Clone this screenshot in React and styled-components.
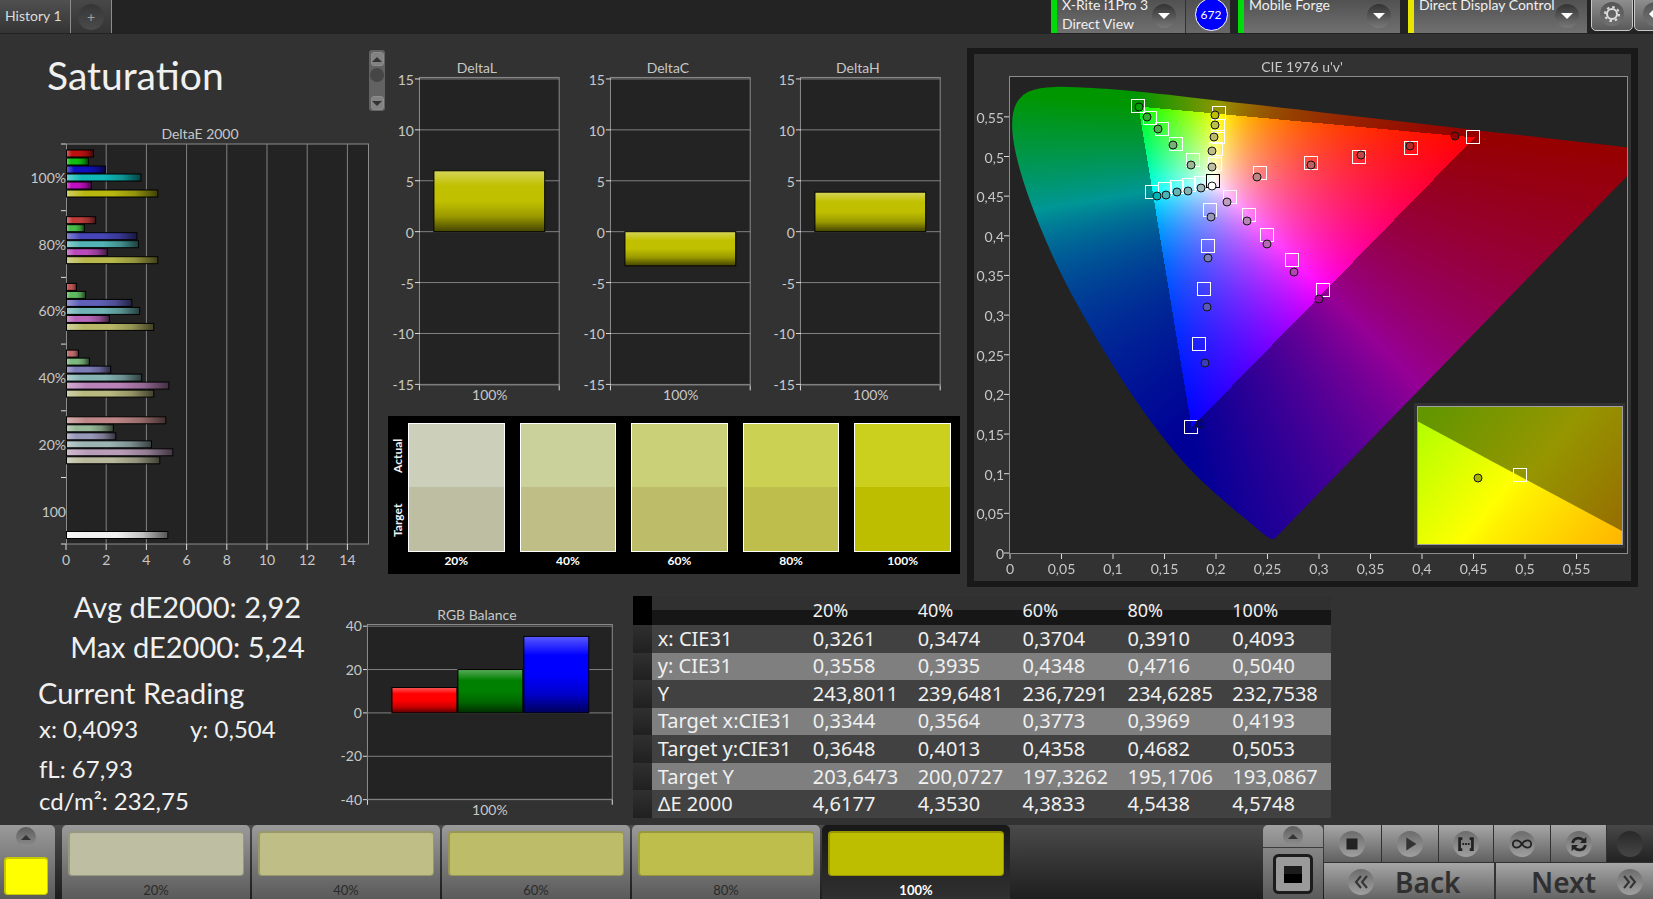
import React, { useEffect, useRef } from "react";
import styled, { createGlobalStyle, css } from "styled-components";

const uiFont = `Lato, "Liberation Sans", sans-serif`;
const gridFont = `"Noto Sans", "Open Sans", sans-serif`;

const deltaGroups = [
  {
    label: "100%",
    values: [1.34, 1.09, 1.93, 3.7, 1.24, 4.54],
    colors: ["#be1010", "#10be10", "#1010be", "#10b8b8", "#be10be", "#b8b810"],
  },
  {
    label: "80%",
    values: [1.45, 0.89, 3.5, 3.58, 2.03, 4.54],
    colors: ["#be3c3c", "#46b946", "#4646b9", "#52b4b4", "#b94ab9", "#b8b84d"],
  },
  {
    label: "60%",
    values: [0.5, 0.95, 3.25, 3.64, 2.13, 4.34],
    colors: ["#be5454", "#5fb95f", "#6060b9", "#6eb4b4", "#b968b9", "#b8b868"],
  },
  {
    label: "40%",
    values: [0.6, 1.14, 2.2, 3.74, 5.09, 4.34],
    colors: ["#be6c6c", "#7cb97c", "#7c7cb9", "#86b4b4", "#b983b9", "#b8b880"],
  },
  {
    label: "20%",
    values: [4.94, 2.33, 2.45, 4.23, 5.29, 4.64],
    colors: ["#be8686", "#98b998", "#9898b9", "#9db4b4", "#b99db9", "#b8b89c"],
  },
  { label: "100", values: [null, null, null, null, null, null, 5.04], colors: ["", "", "", "", "", "", "#f0f0f0"] },
];

const deltaCharts = [
  { title: "DeltaL", value: 5.98 },
  { title: "DeltaC", value: -3.35 },
  { title: "DeltaH", value: 3.88 },
];

const swatches = [
  { label: "20%", actual: "#cccfb9", target: "#bebea3" },
  { label: "40%", actual: "#cbd19a", target: "#bebe86" },
  { label: "60%", actual: "#c9d078", target: "#bdbd69" },
  { label: "80%", actual: "#cad153", target: "#bdbe4b" },
  { label: "100%", actual: "#cad01d", target: "#bebe00" },
];

const tableRows = [
  ["x: CIE31", "0,3261", "0,3474", "0,3704", "0,3910", "0,4093"],
  ["y: CIE31", "0,3558", "0,3935", "0,4348", "0,4716", "0,5040"],
  ["Y", "243,8011", "239,6481", "236,7291", "234,6285", "232,7538"],
  ["Target x:CIE31", "0,3344", "0,3564", "0,3773", "0,3969", "0,4193"],
  ["Target y:CIE31", "0,3648", "0,4013", "0,4358", "0,4682", "0,5053"],
  ["Target Y", "203,6473", "200,0727", "197,3262", "195,1706", "193,0867"],
  ["ΔE 2000", "4,6177", "4,3530", "4,3833", "4,5438", "4,5748"],
];

// Spectral locus, CIE 1931 xy
const locus = [
  [0.1741, 0.005], [0.1733, 0.0048], [0.1714, 0.0051], [0.1689, 0.0069],
  [0.1644, 0.0109], [0.1566, 0.0177], [0.144, 0.0297], [0.1355, 0.0399],
  [0.1241, 0.0578], [0.1096, 0.0868], [0.0913, 0.1327], [0.0687, 0.2007],
  [0.0454, 0.295], [0.0235, 0.4127], [0.0082, 0.5384], [0.0039, 0.6548],
  [0.0139, 0.7502], [0.0389, 0.812], [0.0743, 0.8338], [0.1142, 0.8262],
  [0.1547, 0.8059], [0.2296, 0.7543], [0.3016, 0.6923], [0.3731, 0.6245],
  [0.4441, 0.5547], [0.5125, 0.4866], [0.5752, 0.4242], [0.627, 0.3725],
  [0.6658, 0.334], [0.6915, 0.3083], [0.719, 0.2809], [0.7347, 0.2653],
];

const CIE = { w: 657, h: 527, left: 36, right: 654, top: 23, bottom: 499, zeroY: 498, sx: 1030, sy: 793 };

const cieTargets = [
  [164, 52], [176, 64], [188, 75], [202, 90], [219, 106],
  [245, 59], [244, 72], [244, 83], [242, 95], [241, 110],
  [178, 138], [191, 135], [203, 133], [215, 131], [227, 129],
  [286, 119], [337, 109], [385, 103], [437, 94], [499, 83],
  [256, 143], [275, 161], [293, 181], [318, 206], [349, 236],
  [236, 156], [234, 192], [230, 235], [225, 290], [217, 373],
];

const cieReadings = [
  [165, 53, "#00a000"], [173, 63, "#35b035"], [184, 75, "#4fb04f"], [199, 91, "#74b274"], [217, 111, "#98b898"],
  [241, 61, "#bebe00"], [241, 71, "#bebe4b"], [240, 83, "#bdbd69"], [238, 97, "#bebe86"], [238, 113, "#bebea3"],
  [183, 142, "#00b4b4"], [192, 141, "#46b4b4"], [203, 138, "#66b4b4"], [214, 137, "#82b4b4"], [227, 134, "#9cb8b8"],
  [283, 123, "#be8686"], [337, 111, "#be6060"], [387, 101, "#be4646"], [436, 92, "#b92828"], [481, 82, "#960000"],
  [253, 148, "#be9dbe"], [273, 167, "#b983b9"], [293, 190, "#b968b9"], [320, 218, "#b446b4"], [345, 245, "#a000a0"],
  [237, 163, "#9898be"], [234, 204, "#7c7cb9"], [233, 253, "#5a5ab4"], [231, 309, "#3c3cb4"], [226, 370, "#00008c"],
];

const pointOf = ([x, y]) => {
  const d = -2 * x + 12 * y + 3;
  return [CIE.left + ((4 * x) / d) * CIE.sx, CIE.zeroY - ((9 * y) / d) * CIE.sy];
};

const insideGamut = (x, y) => {
  const corners = [[164, 52], [500, 83], [217, 373]];
  return corners.every(([ax, ay], i) => {
    const [bx, by] = corners[(i + 1) % 3];
    return (bx - ax) * (y - ay) - (by - ay) * (x - ax) >= 0;
  });
};

const paintDiagram = (canvas) => {
  const ctx = canvas.getContext("2d");
  const { w, h, left, right, top, bottom } = CIE;
  const image = ctx.createImageData(w, h);

  for (let py = top; py < bottom; py++) {
    for (let px = left; px < right; px++) {
      const u = (px + 0.5 - CIE.left) / CIE.sx;
      const v = (CIE.zeroY - py - 0.5) / CIE.sy;
      if (v < 0.005) continue;
      const X = (9 * u) / (4 * v);
      const Z = (12 - 3 * u - 20 * v) / (4 * v);
      const rgb = [
        3.2406 * X - 1.5372 - 0.4986 * Z,
        -0.9689 * X + 1.8758 + 0.0415 * Z,
        0.0557 * X - 0.204 + 1.057 * Z,
      ].map((c) => Math.max(0, c));
      const max = Math.max(...rgb);
      const level = insideGamut(px, py) ? 255 : 150;
      const at = (py * w + px) * 4;
      rgb.forEach((c, i) => {
        image.data[at + i] = level * Math.pow(c / max, 0.9);
      });
      image.data[at + 3] = 255;
    }
  }
  ctx.putImageData(image, 0, 0);

  // keep only what lies inside the horseshoe
  const pts = locus.map(pointOf);
  ctx.globalCompositeOperation = "destination-in";
  ctx.beginPath();
  ctx.moveTo(...pts[0]);
  for (let i = 1; i < pts.length - 1; i++) {
    const [x, y] = pts[i];
    const [nx, ny] = pts[i + 1];
    ctx.quadraticCurveTo(x, y, (x + nx) / 2, (y + ny) / 2);
  }
  ctx.lineTo(...pts[pts.length - 1]);
  ctx.closePath();
  ctx.fill();

  ctx.globalCompositeOperation = "destination-over";
  ctx.fillStyle = "#232323";
  ctx.fillRect(left, top, right - left, bottom - top);
  ctx.globalCompositeOperation = "source-over";
};

// Bar with a glossy start and a dark end
const Bar = ({ x, y, width, height, color, horizontal }) => (
  <g>
    <rect x={x} y={y} width={width} height={height} fill={color} />
    <rect
      x={x}
      y={y}
      width={width}
      height={height}
      fill={horizontal ? "url(#glossX)" : "url(#glossY)"}
      stroke="#000"
      strokeWidth="1"
    />
  </g>
);

const GlossDefs = () => (
  <HiddenSvg aria-hidden="true">
    <defs>
      <linearGradient id="glossY" x1="0" y1="0" x2="0" y2="1">
        <stop offset="0" stopColor="#fff" stopOpacity="0.35" />
        <stop offset="0.25" stopColor="#fff" stopOpacity="0" />
        <stop offset="0.5" stopColor="#000" stopOpacity="0" />
        <stop offset="0.75" stopColor="#000" stopOpacity="0.2" />
        <stop offset="1" stopColor="#000" stopOpacity="0.65" />
      </linearGradient>
      <linearGradient id="glossX" x1="0" y1="0" x2="1" y2="0">
        <stop offset="0" stopColor="#fff" stopOpacity="0.35" />
        <stop offset="0.2" stopColor="#fff" stopOpacity="0" />
        <stop offset="0.5" stopColor="#000" stopOpacity="0" />
        <stop offset="0.75" stopColor="#000" stopOpacity="0.2" />
        <stop offset="1" stopColor="#000" stopOpacity="0.65" />
      </linearGradient>
    </defs>
  </HiddenSvg>
);

const DeltaEChart = () => {
  const x0 = 66;
  const unit = 20.1;
  const top = 24;
  const group = 66.7;
  return (
    <Chart viewBox="0 0 388 460" role="img" aria-label="DeltaE 2000">
      <text x="200" y="19" textAnchor="middle">DeltaE 2000</text>
      <Plot x={x0 + 0.5} y={top} width="302" height="400" />
      {[2, 4, 6, 8, 10, 12, 14].map((n) => (
        <GridLine key={n} x1={x0 + n * unit} x2={x0 + n * unit} y1={top} y2={top + 400} />
      ))}
      {[0, 2, 4, 6, 8, 10, 12, 14].map((n) => (
        <g key={n}>
          <Tick x1={x0 + n * unit} x2={x0 + n * unit} y1={top + 400} y2={top + 406} />
          <text x={x0 + n * unit} y="445" textAnchor="middle">{n}</text>
        </g>
      ))}
      {deltaGroups.map((g, i) => (
        <g key={g.label}>
          <Tick x1={x0 - 5} x2={x0} y1={top + i * group} y2={top + i * group} />
          {g.values.map((v, j) =>
            v === null ? null : (
              <Bar
                key={j}
                horizontal
                x={x0 + 0.5}
                y={top + i * group + 6 + j * 8}
                width={v * unit}
                height={7}
                color={g.colors[j]}
              />
            )
          )}
          <text x={x0} y={top + i * group + 39} textAnchor="end">{g.label}</text>
        </g>
      ))}
      <Tick x1={x0 - 5} x2={x0} y1={top + 400} y2={top + 400} />
    </Chart>
  );
};

const DeltaChart = ({ title, value }) => {
  const y0 = 184;
  const unit = 10.2;
  return (
    <Chart viewBox="0 0 191 360" role="img" aria-label={title}>
      <text x="89" y="25" textAnchor="middle">{title}</text>
      <Plot x="31.5" y="29.5" width="140" height="308" />
      {[15, 10, 5, 0, -5, -10, -15].map((n) => (
        <g key={n}>
          <GridLine x1="32" x2="172" y1={y0 - n * unit} y2={y0 - n * unit} />
          <Tick x1="27" x2="32" y1={y0 - n * unit} y2={y0 - n * unit} />
          <text x="26" y={y0 - n * unit + 6} textAnchor="end">{n}</text>
        </g>
      ))}
      <Tick x1="31.5" x2="31.5" y1="338" y2="343" />
      <Tick x1="171.5" x2="171.5" y1="338" y2="343" />
      <Bar
        x={46}
        y={value > 0 ? y0 - value * unit : y0}
        width={111}
        height={Math.abs(value) * unit}
        color="#c0c000"
      />
      <text x="102" y="353" textAnchor="middle">100%</text>
    </Chart>
  );
};

const RgbChart = () => {
  const y0 = 113;
  const unit = 2.17;
  const bars = [
    { value: 11.7, color: "#ff0000" },
    { value: 20, color: "#008000" },
    { value: 35.3, color: "#0000ff" },
  ];
  return (
    <Chart viewBox="0 0 292 222" role="img" aria-label="RGB Balance">
      <text x="136" y="20" textAnchor="middle">RGB Balance</text>
      <Plot x="26.5" y="24.5" width="245" height="175" />
      {[40, 20, 0, -20, -40].map((n) => (
        <g key={n}>
          <GridLine x1="26" x2="272" y1={y0 - n * unit} y2={y0 - n * unit} />
          <Tick x1="22" x2="26" y1={y0 - n * unit} y2={y0 - n * unit} />
          <text x="21" y={y0 - n * unit + 5} textAnchor="end">{n}</text>
        </g>
      ))}
      <Tick x1="26.5" x2="26.5" y1="200" y2="205" />
      <Tick x1="271.5" x2="271.5" y1="200" y2="205" />
      {bars.map((b, i) => (
        <Bar key={b.color} x={51 + i * 66} y={y0 - b.value * unit} width={65} height={b.value * unit} color={b.color} />
      ))}
      <text x="149" y="215" textAnchor="middle">100%</text>
    </Chart>
  );
};

const CieChart = () => {
  const canvasRef = useRef(null);

  useEffect(() => {
    paintDiagram(canvasRef.current);
  }, []);

  const steps = Array.from({ length: 12 }, (_, i) => i * 0.05);
  const format = (n) => String(Number(n.toFixed(2))).replace(".", ",");

  return (
    <CieFrame>
      <CieCanvas ref={canvasRef} width={CIE.w} height={CIE.h} />
      <CieOverlay viewBox={`0 0 ${CIE.w} ${CIE.h}`} role="img" aria-label="CIE 1976 u'v'">
        <defs>
          <linearGradient id="insetBright" gradientUnits="userSpaceOnUse" x1="463" y1="351" x2="641" y2="499">
            <stop offset="0" stopColor="#b4ff00" />
            <stop offset="0.46" stopColor="#ffff00" />
            <stop offset="0.54" stopColor="#fff000" />
            <stop offset="1" stopColor="#ffb400" />
          </linearGradient>
          <linearGradient id="insetDim" gradientUnits="userSpaceOnUse" x1="463" y1="351" x2="641" y2="499">
            <stop offset="0" stopColor="#649600" />
            <stop offset="0.5" stopColor="#969600" />
            <stop offset="1" stopColor="#966a00" />
          </linearGradient>
        </defs>
        <text x="328" y="18" textAnchor="middle">CIE 1976 u'v'</text>
        <PlotFrame x="35.5" y="22.5" width="618" height="477" />
        {steps.map((n) => (
          <g key={n}>
            <Tick x1={36 + n * CIE.sx} x2={36 + n * CIE.sx} y1="500" y2="505" />
            <text x={36 + n * CIE.sx} y="520" textAnchor="middle">{format(n)}</text>
            <Tick x1="30" x2="35" y1={499 - n * CIE.sy} y2={499 - n * CIE.sy} />
            <text x="30" y={505 - n * CIE.sy} textAnchor="end">{format(n)}</text>
          </g>
        ))}
        {cieTargets.map(([x, y]) => (
          <Target key={`${x}-${y}`} x={x - 6.5} y={y - 6.5} width="13" height="13" />
        ))}
        <Target $dark x="232.5" y="120.5" width="13" height="13" />
        {cieReadings.map(([x, y, color]) => (
          <Reading key={`${x}-${y}`} cx={x} cy={y} r="4" fill={color} />
        ))}
        <Reading cx="238" cy="132" r="4" fill="#fff" />

        <rect x="440" y="349" width="211" height="145" fill="#323232" />
        <rect x="443" y="352" width="205" height="139" fill="url(#insetDim)" />
        <path d="M443 367 L648 477 V491 H443 Z" fill="url(#insetBright)" />
        <InsetFrame x="443.5" y="352.5" width="205" height="138" />
        <Target x="539.5" y="414.5" width="13" height="13" />
        <Reading cx="504" cy="424" r="4" fill="#a8b400" />
      </CieOverlay>
    </CieFrame>
  );
};

const Triangle = ({ up, size = 10, color = "#333" }) => (
  <svg width={size} height={size / 2} viewBox="0 0 10 5">
    <path d={up ? "M0 5 L5 0 L10 5 Z" : "M0 0 L5 5 L10 0 Z"} fill={color} />
  </svg>
);

const transportIcons = [
  { name: "Stop", art: <rect x="6" y="6" width="12" height="12" fill="#222" /> },
  { name: "Play", art: <path d="M8 5 L19 12 L8 19 Z" fill="#333" /> },
  {
    name: "Measure range",
    art: (
      <g fill="none" stroke="#222" strokeWidth="3">
        <path d="M8 6 H5 V18 H8 M16 6 H19 V18 H16" />
        <path d="M8 12 H10 M11 12 H13 M14 12 H16" strokeWidth="2" />
      </g>
    ),
  },
  {
    name: "Continuous",
    art: (
      <path
        d="M12 12 C10 9 8 8 6 8 A4 4 0 0 0 6 16 C8 16 10 15 12 12 C14 9 16 8 18 8 A4 4 0 0 1 18 16 C16 16 14 15 12 12 Z"
        fill="none"
        stroke="#222"
        strokeWidth="2"
      />
    ),
  },
  {
    name: "Refresh",
    art: (
      <g>
        <path d="M5 11 C6 5 13 4 17 8 M19 13 C18 19 11 20 7 16" fill="none" stroke="#222" strokeWidth="3" />
        <path d="M20 4 V11 H13 Z M4 20 V13 H11 Z" fill="#222" />
      </g>
    ),
  },
];

const App = () => (
  <>
    <GlobalStyle />
    <GlossDefs />
    <Page>
      <Header>
        <Tabs>
          <Tab>History 1</Tab>
          <AddTab aria-label="Add history">
            <span>+</span>
          </AddTab>
        </Tabs>
        <Devices>
          <Device $status="#00dc0a" $width={134}>
            <span>X-Rite i1Pro 3<br />Direct View</span>
            <Round $size={24}><Triangle color="#fff" size={12} /></Round>
          </Device>
          <Counter><Count>672</Count></Counter>
          <Device $status="#00dc0a" $width={162}>
            <span>Mobile Forge</span>
            <Round $size={24}><Triangle color="#fff" size={12} /></Round>
          </Device>
          <Device $status="#e6e600" $width={179}>
            <span>Direct Display Control</span>
            <Round $size={24}><Triangle color="#fff" size={12} /></Round>
          </Device>
          <Tool aria-label="Settings">
            <Round $size={24}>
              <svg width="18" height="18" viewBox="0 0 18 18">
                <circle cx="9" cy="9" r="5" fill="none" stroke="#ddd" strokeWidth="2" />
                <circle cx="9" cy="9" r="7" fill="none" stroke="#ddd" strokeWidth="2" strokeDasharray="2.500 3" />
              </svg>
            </Round>
          </Tool>
          <Tool $last aria-label="Collapse">
            <Round $size={24}>
              <svg width="12" height="14" viewBox="0 0 12 14">
                <path d="M0 7 L7 0 V14 Z" fill="#fff" />
              </svg>
            </Round>
          </Tool>
        </Devices>
      </Header>

      <Upper>
        <LeftPanel>
          <TitleRow>
            <Title>Saturation</Title>
            <Scroller>
              <ScrollButton aria-label="Scroll up"><Triangle up /></ScrollButton>
              <ScrollThumb />
              <ScrollButton aria-label="Scroll down"><Triangle /></ScrollButton>
            </Scroller>
          </TitleRow>
          <DeltaEChart />
        </LeftPanel>

        <MiddlePanel>
          <ChartRow>
            {deltaCharts.map((c) => (
              <DeltaChart key={c.title} {...c} />
            ))}
          </ChartRow>
          <SwatchPanel>
            <SwatchLegend>
              <span>Target</span>
              <span>Actual</span>
            </SwatchLegend>
            <SwatchList>
              {swatches.map((s) => (
                <SwatchItem key={s.label}>
                  <Swatch $actual={s.actual} $target={s.target} />
                  {s.label}
                </SwatchItem>
              ))}
            </SwatchList>
          </SwatchPanel>
        </MiddlePanel>

        <CieChart />
      </Upper>

      <Lower>
        <Metrics>
          <Summary>Avg dE2000: 2,92</Summary>
          <Summary>Max dE2000: 5,24</Summary>
          <ReadingTitle>Current Reading</ReadingTitle>
          <ReadingRow>
            <span>x: 0,4093</span>
            <span>y: 0,504</span>
          </ReadingRow>
          <ReadingRow $spaced>fL: 67,93</ReadingRow>
          <ReadingRow>cd/m²: 232,75</ReadingRow>
        </Metrics>
        <RgbPanel>
          <RgbChart />
        </RgbPanel>
        <Table>
          <colgroup>
            <col width="19" />
            <col width="155" />
          </colgroup>
          <thead>
            <tr>
              <Corner />
              <th />
              {swatches.map((s) => (
                <th key={s.label} scope="col">{s.label}</th>
              ))}
            </tr>
          </thead>
          <tbody>
            {tableRows.map(([name, ...cells]) => (
              <tr key={name}>
                <RowHandle />
                <th scope="row">{name}</th>
                {cells.map((c) => (
                  <td key={c}>{c}</td>
                ))}
              </tr>
            ))}
          </tbody>
        </Table>
      </Lower>

      <Footer>
        <PatternButton aria-label="Pattern color">
          <Round $size={20}><Triangle up /></Round>
          <PatternColor />
        </PatternButton>
        <Steps>
          {swatches.map((s, i) => (
            <Step key={s.label} $active={i === 4}>
              <StepColor $color={s.target} />
              {s.label}
            </Step>
          ))}
        </Steps>
        <WindowControls>
          <WindowButton aria-label="Expand"><Round $size={20}><Triangle up /></Round></WindowButton>
          <WindowButton $tall aria-label="Pattern window">
            <svg width="40" height="40" viewBox="0 0 40 40">
              <rect x="1.500" y="1.500" width="37" height="37" rx="4" fill="#9a9a9a" stroke="#1c1c1c" strokeWidth="3" />
              <rect x="11" y="12" width="18" height="8" fill="#1c1c1c" />
              <rect x="11" y="20" width="18" height="9" fill="#000" />
            </svg>
          </WindowButton>
        </WindowControls>
        <Transport>
          <TransportRow>
            {transportIcons.map((icon) => (
              <TransportButton key={icon.name} aria-label={icon.name}>
                <Round $size={26} $light>
                  <svg width="22" height="22" viewBox="0 0 24 24">{icon.art}</svg>
                </Round>
              </TransportButton>
            ))}
            <TransportButton $dark aria-label="Record"><Round $size={26} /></TransportButton>
          </TransportRow>
          <NavRow>
            <NavButton>
              <Round $size={26} $light>
                <svg width="16" height="14" viewBox="0 0 16 14">
                  <path d="M8 1 L3 7 L8 13 M14 1 L9 7 L14 13" fill="none" stroke="#333" strokeWidth="2" />
                </svg>
              </Round>
              Back
            </NavButton>
            <NavButton>
              Next
              <Round $size={26} $light>
                <svg width="16" height="14" viewBox="0 0 16 14">
                  <path d="M2 1 L7 7 L2 13 M8 1 L13 7 L8 13" fill="none" stroke="#333" strokeWidth="2" />
                </svg>
              </Round>
            </NavButton>
          </NavRow>
        </Transport>
      </Footer>
    </Page>
  </>
);

export default App;

const GlobalStyle = createGlobalStyle`
  * {
    box-sizing: border-box;
  }

  body {
    margin: 0;
    background: #323232;
    font-family: ${uiFont};
    color: #f0f0f0;
  }

  button {
    margin: 0;
    padding: 0;
    border: 0;
    font-family: inherit;
    color: inherit;
    cursor: pointer;
  }
`;

const raised = css`
  background: linear-gradient(#9a9a9a, #5a5a5a);
`;

const Page = styled.div`
  display: flex;
  flex-direction: column;
  min-height: 100vh;
  overflow: hidden;
`;

// Header
const Header = styled.header`
  display: flex;
  justify-content: space-between;
  height: 34px;
  overflow: hidden;
  background: #232323;
`;

const Tabs = styled.div`
  display: flex;
  height: 33px;
`;

const Tab = styled.button`
  width: 71px;
  padding: 0 0 2px 5px;
  border-right: 1px solid #8c8c8c;
  background: linear-gradient(#505050, #343434);
  font-size: 14px;
  text-align: left;
  color: #dcdcdc;
  white-space: nowrap;
`;

const AddTab = styled.button`
  width: 41px;
  border-right: 1px solid #8c8c8c;
  background: linear-gradient(#484848, #343434);
  color: #a0a0a0;
  font-size: 14px;

  span {
    display: block;
    width: 26px;
    margin: 0 auto;
    border-radius: 50%;
    background: linear-gradient(#363636, #4b4b4b);
    line-height: 26px;
  }
`;

const Devices = styled.div`
  display: flex;
  align-items: flex-end;
  height: 33px;
`;

const Round = styled.span`
  display: flex;
  flex: none;
  align-items: center;
  justify-content: center;
  width: ${({ $size }) => $size}px;
  height: ${({ $size }) => $size}px;
  border-radius: 50%;
  background: ${({ $light }) =>
    $light ? "linear-gradient(#6c6c6c, #a0a0a0)" : "linear-gradient(rgba(0, 0, 0, 0.4), rgba(160, 160, 160, 0.25))"};
`;

const Device = styled.button`
  display: flex;
  justify-content: space-between;
  align-items: flex-start;
  width: ${({ $width }) => $width}px;
  height: 41px;
  margin-left: 8px;
  padding: 3px 9px 0 5px;
  border-left: 6px solid ${({ $status }) => $status};
  background: linear-gradient(#4a4a4a, #707070);
  font-size: 14px;
  line-height: 19px;
  text-align: left;
  white-space: nowrap;

  ${Round} {
    margin-top: 9px;
  }
`;

const Counter = styled.div`
  display: flex;
  align-items: center;
  justify-content: center;
  width: 45px;
  height: 41px;
  padding: 0 0 6px 6px;
  border-left: 1px solid #323232;
  background: linear-gradient(#4a4a4a, #686868);
`;

const Count = styled.span`
  flex: none;
  width: 33px;
  height: 33px;
  margin-top: 9px;
  border: 1px solid #fff;
  border-radius: 50%;
  background: #0000ff;
  color: #fff;
  font-size: 12px;
  line-height: 31px;
  text-align: center;
`;

const Tool = styled.button`
  display: flex;
  align-items: center;
  justify-content: center;
  width: 42px;
  height: 39px;
  margin: 0 ${({ $last }) => ($last ? "-23px" : "0")} 2px ${({ $last }) => ($last ? "1px" : "4px")};
  border: 1px solid #c8c8c8;
  border-radius: 5px;
  ${raised}

  ${Round} {
    margin-top: 4px;
  }
`;

// Charts
const HiddenSvg = styled.svg`
  position: absolute;
  width: 0;
  height: 0;
`;

const Chart = styled.svg`
  display: block;
  width: 100%;
  min-width: 0;
  fill: #c8c8c8;
  font-size: 14px;
`;

const Plot = styled.rect`
  fill: #232323;
  stroke: #8c8c8c;
`;

const PlotFrame = styled.rect`
  fill: none;
  stroke: #8c8c8c;
`;

const InsetFrame = styled.rect`
  fill: none;
  stroke: #a0a0a0;
`;

const GridLine = styled.line`
  stroke: #828282;
`;

const Tick = styled.line`
  stroke: #dcdcdc;
`;

const Target = styled.rect`
  fill: none;
  stroke: ${({ $dark }) => ($dark ? "#000" : "#fff")};
  stroke-width: 1;
`;

const Reading = styled.circle`
  stroke: #141414;
  stroke-width: 1;
`;

const CieFrame = styled.section`
  display: grid;
  align-self: start;
  border: solid #191919;
  border-width: 6px 7px;
`;

const CieCanvas = styled.canvas`
  grid-area: 1 / 1;
  width: 100%;
`;

const CieOverlay = styled(Chart)`
  grid-area: 1 / 1;
`;

// Upper part
const Upper = styled.main`
  display: grid;
  grid-template-columns: 388fr 579fr 671fr;
  padding: 14px 15px 0 0;
`;

const LeftPanel = styled.section`
  min-width: 0;
`;

const TitleRow = styled.div`
  display: flex;
  justify-content: space-between;
  height: 72px;
  padding: 2px 3px 0 47px;
`;

const Title = styled.h1`
  margin: 0;
  font-size: 39px;
  font-weight: 400;
  line-height: 50px;
`;

const Scroller = styled.div`
  display: flex;
  flex-direction: column;
  align-items: center;
  width: 16px;
  height: 61px;
  padding: 2px 0 1px;
  border-radius: 3px;
  background: #626262;
`;

const ScrollButton = styled.button`
  display: flex;
  align-items: center;
  justify-content: center;
  width: 13px;
  height: 14px;
  border: 1px solid #8c8c8c;
  border-radius: 3px;
  background: #828282;

  &:last-child {
    margin-top: auto;
  }
`;

const ScrollThumb = styled.div`
  width: 14px;
  height: 14px;
  margin-top: 2px;
  border-radius: 50%;
  background: #464646;
`;

const MiddlePanel = styled.section`
  min-width: 0;
  padding-right: 7px;
`;

const ChartRow = styled.div`
  display: grid;
  grid-template-columns: repeat(3, 1fr);
  margin-bottom: 9px;
`;

const SwatchPanel = styled.div`
  display: grid;
  grid-template-columns: 20px 1fr;
  padding: 7px 9px 4px 0;
  background: #000;
`;

const SwatchLegend = styled.div`
  display: flex;
  justify-content: space-around;
  height: 129px;
  writing-mode: vertical-rl;
  transform: rotate(180deg);
  font-size: 12px;
  font-weight: 700;
  line-height: 20px;
`;

const SwatchList = styled.div`
  display: grid;
  grid-template-columns: repeat(5, 1fr);
  column-gap: 15px;
`;

const SwatchItem = styled.div`
  font-size: 12px;
  font-weight: 700;
  line-height: 18px;
  text-align: center;
  color: #fff;
`;

const Swatch = styled.div`
  height: 129px;
  border: 1px solid #fff;
  background: linear-gradient(${({ $actual, $target }) => `${$actual} 50%, ${$target} 50%`});
`;

// Lower part
const Lower = styled.section`
  display: grid;
  grid-template-columns: 340fr 292fr 699fr 322fr;
  align-items: start;
`;

const Metrics = styled.div`
  white-space: nowrap;
`;

const Summary = styled.div`
  padding-left: 34px;
  font-size: 29px;
  line-height: 40px;
  text-align: center;
`;

const ReadingTitle = styled.h2`
  margin: 6px 0 0;
  padding-left: 38px;
  font-size: 29px;
  font-weight: 400;
  line-height: 40px;
`;

const ReadingRow = styled.div`
  display: flex;
  margin-top: ${({ $spaced }) => ($spaced ? "8px" : "0")};
  padding-left: 39px;
  font-size: 24px;
  line-height: 32px;

  span {
    min-width: 151px;
  }
`;

const RgbPanel = styled.div`
  padding-top: 13px;
`;

const Table = styled.table`
  width: 100%;
  height: 222px;
  margin-top: 9px;
  border-collapse: collapse;
  table-layout: fixed;
  font-family: ${gridFont};
  font-size: 20px;
  line-height: 24px;
  white-space: nowrap;

  th,
  td {
    padding: 0 0 0 6px;
    font-weight: 400;
    text-align: left;
  }

  thead tr {
    height: 29px;
    background: linear-gradient(#303030 50%, #161616 50%);
  }

  thead th {
    padding-bottom: 2px;
    font-size: 18px;
  }

  tbody tr {
    background: #414141;
  }

  tbody tr:nth-child(even) {
    background: #7f7f7f;
  }
`;

const Corner = styled.td`
  background: #000;
`;

const RowHandle = styled.td`
  background: linear-gradient(#303030, #202020);
`;

// Footer
const Footer = styled.footer`
  display: grid;
  grid-template-columns: 62fr 948fr 253fr 61fr 329fr;
  height: 74px;
  margin-top: auto;
  background: linear-gradient(#4a4a4a, #1e1e1e);
`;

const PatternButton = styled.button`
  display: flex;
  flex-direction: column;
  align-items: center;
  justify-content: space-between;
  margin-right: 7px;
  padding: 2px 7px 4px 4px;
  border-radius: 0 5px 0 0;
  ${raised}
`;

const PatternColor = styled.span`
  width: 100%;
  height: 38px;
  border: 2px solid #c8c800;
  border-width: 2px 1px 1px 2px;
  border-radius: 4px;
  background: #ffff00;
`;

const Steps = styled.div`
  display: grid;
  grid-template-columns: repeat(5, 1fr);
  column-gap: 2px;
`;

const Step = styled.button`
  display: flex;
  flex-direction: column;
  align-items: center;
  gap: 5px;
  padding: 6px 6px 0;
  border-radius: 5px 5px 0 0;
  font-size: 13px;
  line-height: 18px;
  color: #2a2a2a;
  ${raised}
  ${({ $active }) =>
    $active &&
    css`
      background: linear-gradient(#181818, #303030);
      color: #fff;
      font-weight: 700;
    `}
`;

const StepColor = styled.span`
  width: 100%;
  height: 45px;
  border: solid rgba(0, 0, 0, 0.2);
  border-width: 2px 1px 1px 2px;
  border-radius: 4px;
  background: ${({ $color }) => $color};
`;

const WindowControls = styled.div`
  grid-column: 4;
  display: flex;
  flex-direction: column;
  gap: 1px;
  margin-right: 1px;
`;

const WindowButton = styled.button`
  display: flex;
  align-items: center;
  justify-content: center;
  height: ${({ $tall }) => ($tall ? "51px" : "22px")};
  border-radius: ${({ $tall }) => ($tall ? "0" : "5px 5px 0 0")};
  background: ${({ $tall }) => ($tall ? "linear-gradient(#868686, #5a5a5a)" : "linear-gradient(#a0a0a0, #888)")};
`;

const Transport = styled.div`
  display: grid;
  grid-template-rows: 37px 36px;
  row-gap: 1px;
  background: #323232;
`;

const TransportRow = styled.div`
  display: grid;
  grid-template-columns: 57fr 56fr 55fr 56fr 55fr 46fr;
  column-gap: 1px;
`;

const TransportButton = styled.button`
  display: flex;
  align-items: center;
  justify-content: center;
  background: ${({ $dark }) =>
    $dark ? "linear-gradient(#484848, #222)" : "linear-gradient(#a6a6a6, #606060)"};
`;

const NavRow = styled.div`
  display: grid;
  grid-template-columns: 171fr 157fr;
  column-gap: 2px;
`;

const NavButton = styled.button`
  display: flex;
  align-items: center;
  justify-content: flex-end;
  gap: 21px;
  padding: 2px 34px 0 0;
  background: linear-gradient(#a6a6a6, #646464);
  font-family: ${gridFont};
  font-size: 28px;
  font-weight: 600;
  line-height: 34px;
  color: #303030;

  & + & {
    padding-right: 10px;
  }
`;
